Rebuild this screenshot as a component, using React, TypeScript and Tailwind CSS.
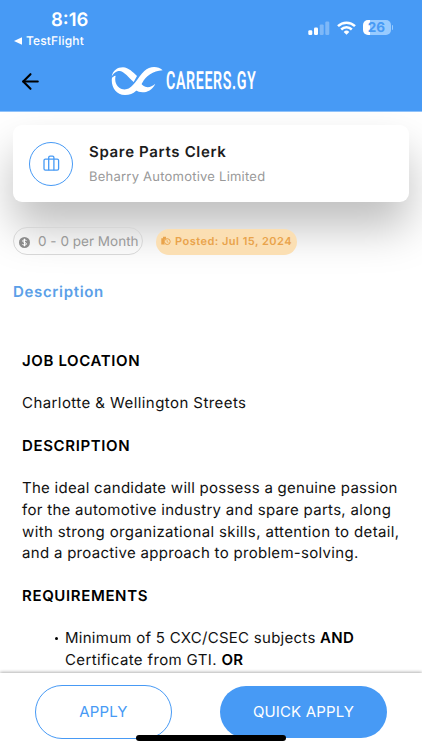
import React from 'react'
import { FiArrowLeft } from 'react-icons/fi'

function StatusIcons() {
  return (
    <div className="flex items-center">
      <svg width="22" height="14" viewBox="0 0 22 14" fill="#fff">
        <rect x="0.3" y="9.2" width="4" height="4.8" rx="1.2" />
        <rect x="6" y="6.5" width="4" height="7.5" rx="1.2" />
        <rect x="11.7" y="3.4" width="4" height="10.6" rx="1.2" opacity="0.3" />
        <rect x="17.3" y="0.6" width="4" height="13.4" rx="1.2" opacity="0.3" />
      </svg>
      <svg className="ml-[7px]" width="19" height="14" viewBox="0 0 19 14" fill="none" stroke="#fff" strokeWidth="2.5">
        <path d="M1 5.1 A12.2 12.2 0 0 1 18 5.1" />
        <path d="M4.2 8.5 A7.6 7.6 0 0 1 14.8 8.5" />
        <path d="M9.5 13.8 L6.7 10.9 A4 4 0 0 1 12.3 10.9 Z" fill="#fff" stroke="none" />
      </svg>
      <div className="ml-[7px] flex h-[15px] w-[28px] items-center justify-center overflow-hidden rounded-[5px] bg-[linear-gradient(90deg,#fff_0,#fff_7px,#98cbff_7px)] pt-px text-[13.5px] font-bold text-[#479af5]">
        26
      </div>
      <div className="ml-[1px] h-[5px] w-[1.5px] rounded-r bg-[#98cbff]" />
    </div>
  )
}

function Logo() {
  return (
    <div className="flex items-center text-white">
      <svg width="52" height="30" viewBox="18 20 156 90" fill="currentColor">
        <path d="M20 52 C23 34 37 24 54 24 C71 25 84 39 96 50 L86 68 C70 55 59 37 45 35 C34 34 25 42 20 52 Z" />
        <path d="M21 55 C17 79 31 106 60 107 C88 107 102 87 112 70 C123 50 143 35 173 33 C158 19 134 20 118 35 C98 54 86 86 63 90 C41 92 26 73 32 49 C26 50 23 53 21 55 Z" />
        <path d="M101 80 L93 93 C104 102 137 104 151 73 C141 81 131 86 121 82 C114 79 110 75 106 70 Z" />
      </svg>
      <div className="ml-[3px] w-[90px] pt-[1px]">
        <span className="block origin-left scale-x-[0.57] whitespace-nowrap font-['Roboto','Liberation_Sans',sans-serif] text-[25px] font-semibold leading-[30px] tracking-[1.1px]">
          CAREERS.GY
        </span>
      </div>
    </div>
  )
}

function Header() {
  return (
    <header className="h-[112px] shrink-0 border-b border-[#8fc2fa] bg-[#479af5] text-white">
      <div className="flex h-[51px] justify-between pl-[14px] pr-[29px]">
        <div className="pt-[9px]">
          <div className="pl-[37px] text-[18.5px] font-semibold leading-[22px]">8:16</div>
          <div className="mt-[3px] flex items-center text-[12px] font-medium leading-[14px] tracking-[0.15px]">
            <svg className="mr-[4px]" width="8" height="8" viewBox="0 0 8 8" fill="currentColor">
              <path d="M0 4 L8 0.3 V7.7 Z" />
            </svg>
            TestFlight
          </div>
        </div>
        <div className="pt-[20px]">
          <StatusIcons />
        </div>
      </div>
      <div className="flex h-[60px] items-center">
        <FiArrowLeft className="ml-[18px]" size={25} color="#000" strokeWidth={2} />
        <div className="ml-[68px]">
          <Logo />
        </div>
      </div>
    </header>
  )
}

function JobCard() {
  return (
    <div className="mx-[13px] mt-[13px] flex h-[77px] items-center rounded-[9px] bg-white pl-[16px] shadow-[0_26px_44px_rgba(0,0,0,0.25)]">
      <div className="flex h-[44px] w-[44px] items-center justify-center rounded-full border border-[#479af5]">
        <svg width="17" height="17" viewBox="0 0 17 17" fill="none" stroke="#479af5" strokeWidth="1.3">
          <rect x="1" y="4.2" width="14.6" height="11" rx="1.4" />
          <path d="M5.7 15.2 V2.6 Q5.7 1.2 7.1 1.2 H9.5 Q10.9 1.2 10.9 2.6 V15.2" />
        </svg>
      </div>
      <div className="ml-[16px]">
        <div className="text-[15px] font-semibold leading-[22px] tracking-[0.66px] text-[#1c1c1c]">Spare Parts Clerk</div>
        <div className="mt-[4px] text-[13px] leading-[20px] tracking-[0.23px] text-[#999]">Beharry Automotive Limited</div>
      </div>
    </div>
  )
}

function Tags() {
  return (
    <div className="ml-[13px] mt-[25px] flex items-start">
      <div className="flex h-[28px] w-[130px] items-center whitespace-nowrap rounded-full border border-[#d6d6d6] pl-[5px] pt-[2px] text-[13.5px] tracking-[0.02px] text-[#999]">
        <svg className="mr-[8px] shrink-0" width="11" height="11" viewBox="0 0 11 11">
          <circle cx="5.5" cy="5.5" r="5.5" fill="#8c8c8c" />
          <path
            d="M7.4 3.9 Q7.1 2.8 5.5 2.8 Q3.7 2.8 3.7 4 Q3.7 5.1 5.5 5.4 Q7.4 5.7 7.4 6.9 Q7.4 8.2 5.5 8.2 Q3.7 8.2 3.5 7 M5.5 1.7 V9.3"
            fill="none"
            stroke="#fff"
            strokeWidth="1"
          />
        </svg>
        0 - 0 per Month
      </div>
      <div className="ml-[13px] mt-[2px] flex h-[26px] w-[141px] items-center whitespace-nowrap rounded-full bg-[#fbdfb3] pb-[2px] pl-[5px] text-[11px] font-semibold tracking-[0.48px] text-[#e9a34b]">
        <svg className="mr-[4px] shrink-0" width="10" height="10" viewBox="0 0 10 10" fill="none" stroke="currentColor">
          <path d="M0.3 2.2 H2 V0.8 H5 V2.2 H5.6 Q2.9 3 2.9 5.8 Q2.9 7.4 3.9 8.6 H0.3 Z" fill="currentColor" stroke="none" />
          <circle cx="6.3" cy="5.6" r="2.9" strokeWidth="1" />
          <path d="M6.1 4.1 V5.8 L7.4 6.5" strokeWidth="0.8" />
        </svg>
        Posted: Jul 15, 2024
      </div>
    </div>
  )
}

function Description() {
  return (
    <section className="ml-[22px] mt-[46.6px] text-[15px] leading-[21.6px] tracking-[0.4px] text-[#111]">
      <h3 className="font-semibold tracking-[0.63px] text-black">JOB LOCATION</h3>
      <p className="mt-[21px] tracking-[0.43px]">Charlotte &amp; Wellington Streets</p>
      <h3 className="mt-[21px] font-semibold tracking-[0.63px] text-black">DESCRIPTION</h3>
      <p className="mt-[21px] whitespace-nowrap tracking-[0.3px]">
        <span className="tracking-[0.26px]">The ideal candidate will possess a genuine passion</span>
        <br />
        for the automotive industry and spare parts, along
        <br />
        <span className="tracking-[0.36px]">with strong organizational skills, attention to detail,</span>
        <br />
        and a proactive approach to problem-solving.
      </p>
      <h3 className="mt-[21px] font-semibold tracking-[0.63px] text-black">REQUIREMENTS</h3>
      <ul className="mt-[21px]">
        <li className="flex whitespace-nowrap pl-[33px] tracking-[0.27px]">
          <span className="mr-[7px] mt-[10px] h-[3px] w-[3px] rounded-full bg-black" />
          <span>
            Minimum of 5 CXC/CSEC subjects <b className="font-semibold text-black">AND</b>
            <br />
            <span className="tracking-[0.36px]">
              Certificate from GTI. <b className="font-semibold text-black">OR</b>
            </span>
          </span>
        </li>
      </ul>
    </section>
  )
}

function ActionBar() {
  return (
    <footer className="relative flex h-[77px] shrink-0 items-start bg-white pl-[35px] pt-[12px] text-[15px] tracking-[0.15px] shadow-[0_-1px_3px_rgba(0,0,0,0.3)]">
      <button className="h-[54px] w-[137px] rounded-full border border-[#479af5] text-[#479af5]">APPLY</button>
      <button className="ml-[48px] mt-[1px] h-[52px] w-[167px] rounded-full bg-[#479af5] text-white">QUICK APPLY</button>
      <div className="absolute left-[136px] top-[62px] h-[6px] w-[150px] rounded-full bg-black" />
    </footer>
  )
}

export default function App() {
  return (
    <div className="flex h-[750px] w-[422px] flex-col overflow-hidden bg-white font-['Inter','Liberation_Sans',sans-serif] [text-rendering:geometricPrecision]">
      <Header />
      <main className="min-h-0 flex-1 overflow-hidden">
        <JobCard />
        <Tags />
        <h2 className="ml-[13px] mt-[26px] text-[15px] font-semibold leading-[22px] tracking-[0.66px] text-[#5b9fe8]">
          Description
        </h2>
        <Description />
      </main>
      <ActionBar />
    </div>
  )
}
